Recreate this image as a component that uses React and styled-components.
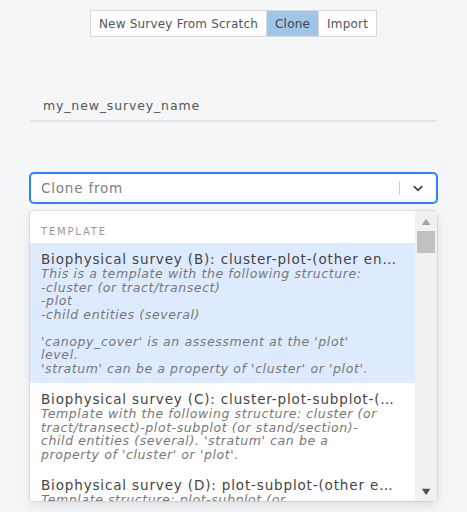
import React from "react";
import styled, { createGlobalStyle } from "styled-components";

const Global = createGlobalStyle`
  html, body { margin: 0; padding: 0; }
  body {
    background: #f5f6f8;
    font-family: "DejaVu Sans", "Open Sans", sans-serif;
    color: #333;
  }
`;

const templates = [
  {
    label: "Biophysical survey (B): cluster-plot-(other entities)",
    description:
      "This is a template with the following structure:\n-cluster (or tract/transect)\n-plot\n-child entities (several)\n\n'canopy_cover' is an assessment at the 'plot'\nlevel.\n'stratum' can be a property of 'cluster' or 'plot'.",
    focused: true,
  },
  {
    label: "Biophysical survey (C): cluster-plot-subplot-(other entities)",
    description:
      "Template with the following structure: cluster (or\ntract/transect)-plot-subplot (or stand/section)-\nchild entities (several). 'stratum' can be a\nproperty of 'cluster' or 'plot'.",
  },
  {
    label: "Biophysical survey (D): plot-subplot-(other entities)",
    description: "Template structure: plot-subplot (or\nstand/section)-child entities (several).",
  },
];

export default function App() {
  return (
    <Page>
      <Global />
      <ButtonGroup>
        <ModeButton>New Survey From Scratch</ModeButton>
        <ModeButton active>Clone</ModeButton>
        <ModeButton>Import</ModeButton>
      </ButtonGroup>

      <NameField>
        <NameText>my_new_survey_name</NameText>
      </NameField>

      <SelectBox>
        <Placeholder>Clone from</Placeholder>
        <Separator />
        <Chevron>
          <svg width="16" height="16" viewBox="0 0 20 20">
            <path
              fill="currentColor"
              d="M4.516 7.548c0.436-0.446 1.043-0.481 1.576 0l3.908 3.747 3.908-3.747c0.533-0.481 1.141-0.446 1.574 0 0.436 0.445 0.408 1.197 0 1.615-0.406 0.418-4.695 4.502-4.695 4.502-0.217 0.223-0.502 0.335-0.787 0.335s-0.57-0.112-0.789-0.335c0 0-4.287-4.084-4.695-4.502s-0.436-1.170 0-1.615z"
            />
          </svg>
        </Chevron>
      </SelectBox>

      <Menu>
        <MenuList>
          <GroupHeading>Template</GroupHeading>
          {templates.map((t) => (
            <Option key={t.label} focused={t.focused}>
              <OptionTitle>{t.label}</OptionTitle>
              <OptionDesc>{t.description}</OptionDesc>
            </Option>
          ))}
        </MenuList>
        <Scrollbar>
          <Arrow dim>▲</Arrow>
          <Thumb />
          <Track />
          <Arrow>▼</Arrow>
        </Scrollbar>
      </Menu>
    </Page>
  );
}

const Page = styled.div`
  width: 467px;
  height: 512px;
  padding: 10px 30px 0;
  box-sizing: border-box;
  display: flex;
  flex-direction: column;
  overflow: hidden;
`;

const ButtonGroup = styled.div`
  align-self: center;
  display: flex;
  border: 1px solid #d8dadf;
  background: #fff;
`;

const ModeButton = styled.div`
  height: 25px;
  display: flex;
  align-items: center;
  padding: 0 8px;
  font-size: 12px;
  letter-spacing: 0.2px;
  color: ${(p) => (p.active ? "#444" : "#555")};
  background: ${(p) => (p.active ? "#9fc5e8" : "#fff")};
  & + & {
    border-left: 1px solid #d8dadf;
  }
`;

const NameField = styled.div`
  margin-top: 54px;
  height: 29px;
  display: flex;
  align-items: center;
  padding-left: 13px;
  border-bottom: 2px solid #e3e4e8;
`;

const NameText = styled.span`
  font-size: 12.5px;
  letter-spacing: 0.85px;
  color: #555;
`;

const SelectBox = styled.div`
  margin-top: 51px;
  height: 28px;
  border: 1px solid #2684ff;
  box-shadow: 0 0 0 1px #2684ff;
  border-radius: 4px;
  background: #fff;
  display: flex;
  align-items: center;
  padding-left: 10px;
`;

const Placeholder = styled.span`
  flex: 1;
  font-size: 13.5px;
  letter-spacing: 0.8px;
  color: #808080;
`;

const Separator = styled.span`
  width: 1px;
  height: 14px;
  background: #ccc;
`;

const Chevron = styled.span`
  width: 36px;
  display: flex;
  justify-content: center;
  color: #444;
`;

const Menu = styled.div`
  margin-top: 8px;
  height: 290px;
  display: flex;
  background: #fff;
  border-radius: 4px;
  overflow: hidden;
  box-shadow: 0 0 0 1px hsla(0, 0%, 0%, 0.08), 0 4px 11px hsla(0, 0%, 0%, 0.1);
`;

const MenuList = styled.div`
  flex: 1;
  min-width: 0;
  padding-top: 15px;
  overflow: hidden;
`;

const GroupHeading = styled.div`
  padding: 0 11px 6px;
  font-size: 10px;
  letter-spacing: 1.8px;
  text-transform: uppercase;
  color: #999;
`;

const Option = styled.div`
  padding: 8px 14px 8px 11px;
  background: ${(p) => (p.focused ? "#deebff" : "#fff")};

  &:first-of-type {
    padding-bottom: 9px;
  }
`;

const OptionTitle = styled.div`
  font-size: 13.5px;
  line-height: 16px;
  letter-spacing: 0.85px;
  color: #444;
  white-space: nowrap;
  overflow: hidden;
  text-overflow: ellipsis;
`;

const OptionDesc = styled.div`
  font-size: 12.5px;
  line-height: 13.5px;
  letter-spacing: 0.6px;
  font-style: italic;
  color: #777;
  white-space: pre-line;
`;

const Scrollbar = styled.div`
  width: 22px;
  background: #f1f1f1;
  display: flex;
  flex-direction: column;
  align-items: center;
`;

const Arrow = styled.div`
  height: 20px;
  display: flex;
  align-items: center;
  justify-content: center;
  font-size: 8px;
  transform: scaleX(1.4);
  color: ${(p) => (p.dim ? "#a3a3a3" : "#505050")};
`;

const Thumb = styled.div`
  width: 18px;
  height: 22px;
  background: #c1c1c1;
`;

const Track = styled.div`
  flex: 1;
`;
